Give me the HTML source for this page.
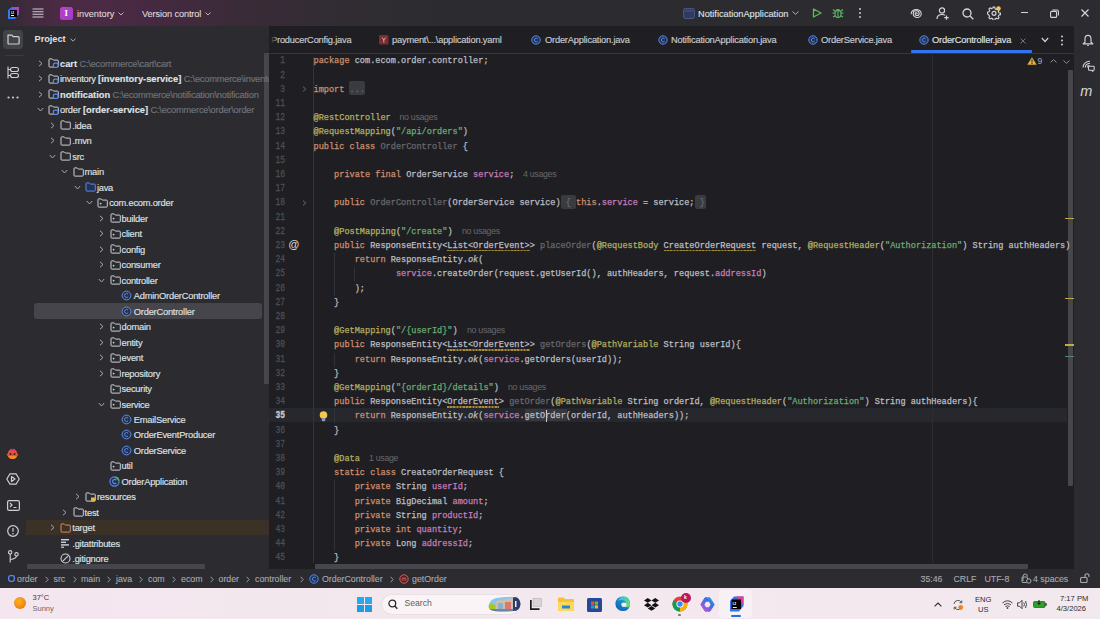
<!DOCTYPE html>
<html><head><meta charset="utf-8">
<style>
*{margin:0;padding:0;box-sizing:border-box}
html,body{width:1100px;height:619px;overflow:hidden;background:#2c2c30;font-family:"Liberation Sans",sans-serif;color:#dfe1e5}
.a{position:absolute}
#title{left:0;top:0;width:1100px;height:26px;background:linear-gradient(90deg,#2f2c33 0px,#342b36 12px,#442a40 35px,#4b2a45 60px,#4a2a44 110px,#44293f 170px,#3a2b38 240px,#312c33 340px,#2c2c30 440px)}
#strip{left:0;top:26px;width:26px;height:543px;background:#2c2c30}
#proj{left:26px;top:26px;width:243px;height:543px;background:#2c2c30}
#tabs{left:269px;top:26px;width:805px;height:28px;background:#1f1f23;border-bottom:1px solid #35373b}
#editor{left:269px;top:54px;width:805px;height:515px;background:#1f1f23;overflow:hidden}
#rstrip{left:1074px;top:26px;width:26px;height:543px;background:#2c2c30}
#status{left:0;top:569px;width:1100px;height:19px;background:#2c2c30}
#taskbar{left:0;top:588px;width:1100px;height:31px;background:linear-gradient(90deg,#f4e6ee 0%,#f3e8ee 40%,#f2e9ee 100%)}
.code{font-family:"Liberation Mono",monospace;font-size:8.58px;line-height:14.2px;white-space:pre;color:#bcbec4;-webkit-text-stroke:0.25px currentColor}
.k{color:#cf8e6d}.an{color:#b3ae60}.s{color:#6aab73}.f{color:#c77dbb}.g{color:#66686e}.it{font-style:italic}
.hint{font-family:"Liberation Sans",sans-serif;font-size:8.8px;letter-spacing:-0.3px;color:#66686d}
.lnn{display:inline-block;transform:scaleY(1.28);transform-origin:50% 60%;-webkit-text-stroke:0.2px currentColor}
.ln{font-family:"Liberation Mono",monospace;font-size:8px;line-height:14.2px;white-space:pre;color:#4e5055;text-align:right}
.tree{font-size:9.3px;letter-spacing:-0.22px;-webkit-text-stroke:0.15px currentColor;color:#dfe1e5;white-space:pre}
.tt{-webkit-text-stroke:0.12px currentColor;font-size:9.2px;line-height:13px;color:#dcd6dc;white-space:pre}
.pth{color:#6f737a}
.tree b{font-weight:bold;letter-spacing:0}
.tab{font-size:9.3px;letter-spacing:-0.2px;-webkit-text-stroke:0.15px currentColor;line-height:12px;color:#c9cbd0;white-space:pre}
.st{-webkit-text-stroke:0.1px currentColor;font-size:8.8px;line-height:12px;color:#a8aab0;white-space:pre}
.tb{line-height:10px;white-space:pre}
.wv{}
.row{position:absolute;height:15.48px;line-height:15.48px}
</style></head><body>
<div id="title" class="a">
  <svg class="a" style="left:6px;top:6px" width="14" height="14" viewBox="0 0 14 14">
    <path d="M2 4 L6 1 L13 1 L13 8 L9 13 L2 13 Z" fill="#2f7bf5"/>
    <path d="M7 1 L13 1 L13 9 Z" fill="#e9348f"/>
    <path d="M5 1 L11 1 L13 4 L13 8 Z" fill="#8c4fe8" opacity=".8"/>
    <rect x="4" y="4" width="7" height="7" fill="#000"/>
    <rect x="5" y="9" width="3" height="1" fill="#fff"/>
    <text x="5" y="8" font-size="3.5" fill="#fff" font-family="Liberation Sans" font-weight="bold">IJ</text>
  </svg>
  <svg class="a" style="left:32px;top:8px" width="12" height="10" viewBox="0 0 12 10">
    <g stroke="#d0ccd2" stroke-width="1.1"><path d="M0.5 1H11.5M0.5 3.7H11.5M0.5 6.3H11.5M0.5 9H11.5"/></g>
  </svg>
  <div class="a" style="left:59.5px;top:6.5px;width:13.5px;height:13px;border-radius:2.5px;background:linear-gradient(135deg,#c040c8,#9a3ec4);color:#fff;font:bold 9px/13px 'Liberation Serif',serif;text-align:center">I</div>
  <div class="a tt" style="left:77px;top:7.7px">inventory</div>
  <svg class="a" style="left:118px;top:12px" width="6" height="4" viewBox="0 0 6 4"><path d="M0.5 0.5L3 3L5.5 0.5" stroke="#b9b4bb" fill="none" stroke-width="1"/></svg>
  <div class="a tt" style="left:142px;top:7.7px;letter-spacing:-0.1px">Version control</div>
  <svg class="a" style="left:205px;top:12px" width="6" height="4" viewBox="0 0 6 4"><path d="M0.5 0.5L3 3L5.5 0.5" stroke="#b9b4bb" fill="none" stroke-width="1"/></svg>

  <svg class="a" style="left:683px;top:8px" width="12" height="11" viewBox="0 0 12 11"><rect x="0.6" y="0.6" width="10.8" height="9.8" rx="1.5" fill="#2f3a5c" stroke="#4a5a8c" stroke-width="1"/><rect x="2" y="2.5" width="8" height="1" fill="#4a5a8c"/></svg>
  <div class="a tt" style="left:698px;top:8px;color:#dfe1e5">NotificationApplication</div>
  <svg class="a" style="left:792px;top:11px" width="7" height="4" viewBox="0 0 7 4"><path d="M0.5 0.5L3.5 3.3L6.5 0.5" stroke="#b0b2b8" fill="none" stroke-width="1"/></svg>
  <svg class="a" style="left:812px;top:8px" width="10" height="10" viewBox="0 0 10 10"><path d="M1.5 1 L9 5 L1.5 9 Z" fill="none" stroke="#5fb865" stroke-width="1.3" stroke-linejoin="round"/></svg>
  <svg class="a" style="left:832px;top:7px" width="12" height="12" viewBox="0 0 12 12"><g stroke="#5fb865" stroke-width="1.1" fill="none"><ellipse cx="6" cy="7" rx="3" ry="3.5"/><path d="M4 3.5 Q6 1.5 8 3.5M0.5 6H3M9 6H11.5M1 10L3.2 8.8M11 10L8.8 8.8M1 2.5L3.5 4.5M11 2.5L8.5 4.5M6 4V10.5"/></g></svg>
  <svg class="a" style="left:858px;top:7px" width="4" height="12" viewBox="0 0 4 12"><g fill="#c8cacf"><circle cx="2" cy="2" r="1"/><circle cx="2" cy="6" r="1"/><circle cx="2" cy="10" r="1"/></g></svg>

  <svg class="a" style="left:910px;top:8.5px" width="13" height="10" viewBox="0 0 13 10"><path d="M7.2 5.2A1 1 0 0 0 5.2 5.2A2 2 0 0 0 9.2 5.2A3 3 0 0 0 3.2 5.2A4 4 0 0 0 11.2 5.2A5 4.4 0 0 0 1.2 5.2" transform="translate(0,-0.3) scale(1,0.95)" fill="none" stroke="#d4d6da" stroke-width="1.1" stroke-linecap="round"/></svg>
  <svg class="a" style="left:936px;top:7px" width="14" height="13" viewBox="0 0 14 13"><g stroke="#d4d6da" stroke-width="1.2" fill="none"><circle cx="6" cy="3.5" r="2.6"/><path d="M1 12 Q1 7.5 6 7.5 Q8 7.5 9 8.3"/><path d="M10.5 8.5V12.8M8.3 10.6H12.7"/></g></svg>
  <svg class="a" style="left:962px;top:8px" width="12" height="12" viewBox="0 0 12 12"><g stroke="#d4d6da" stroke-width="1.3" fill="none"><circle cx="5" cy="5" r="4"/><path d="M8 8L11.3 11.3"/></g></svg>
  <svg class="a" style="left:987px;top:6px" width="14" height="14" viewBox="0 0 14 14"><g stroke="#d4d6da" stroke-width="1.2" fill="none"><path d="M6.2 1.5h1.6l.4 1.8 1.3.7 1.7-.7 1.1 1.1-.7 1.7.7 1.3 1.8.4v1.6l-1.8.4-.7 1.3.7 1.7-1.1 1.1-1.7-.7-1.3.7-.4 1.8H6.2l-.4-1.8-1.3-.7-1.7.7-1.1-1.1.7-1.7-.7-1.3L0 8.4V6.8l1.8-.4.7-1.3-.7-1.7 1.1-1.1 1.7.7 1.3-.7z" transform="translate(0.3,-0.3) scale(0.95)"/><circle cx="7" cy="7.3" r="2"/></g><circle cx="11.5" cy="2.5" r="2.2" fill="#f2c55c"/></svg>
  <div class="a" style="left:1021px;top:12px;width:7px;height:1.2px;background:#d4d6da"></div>
  <svg class="a" style="left:1050px;top:9px" width="9" height="9" viewBox="0 0 9 9"><g stroke="#d4d6da" stroke-width="1.1" fill="none"><rect x="0.6" y="2.4" width="6" height="6" rx="1"/><path d="M2.4 1 H7 Q8.4 1 8.4 2.4 V6.6"/></g></svg>
  <svg class="a" style="left:1081px;top:9px" width="8" height="8" viewBox="0 0 8 8"><path d="M0.5 0.5L7.5 7.5M7.5 0.5L0.5 7.5" stroke="#d4d6da" stroke-width="1.2"/></svg>
</div>
<div id="strip" class="a">
  <div class="a" style="left:3px;top:4px;width:19.5px;height:18.5px;border-radius:3.5px;background:#414347"></div>
  <svg class="a" style="left:6.5px;top:8px" width="13" height="11" viewBox="0 0 13 11"><path d="M1 1.2h3.8l1.4 1.4h5q.9 0 .9.9V9.1q0 .9-.9.9H1.9q-.9 0-.9-.9z" fill="none" stroke="#ced0d6" stroke-width="1.2"/></svg>
  <div class="a" style="left:5px;top:28.5px;width:19px;height:1px;background:#393b40"></div>
  <svg class="a" style="left:7px;top:40px" width="12" height="13" viewBox="0 0 12 13"><g fill="none" stroke="#ced0d6" stroke-width="1.1"><path d="M1 0.5V12.5M1 3.5H3M1 9.5H3"/><rect x="3.5" y="1.5" width="8" height="4" rx="2"/><rect x="3.5" y="7.5" width="8" height="4" rx="2"/></g></svg>
  <svg class="a" style="left:7px;top:70px" width="12" height="3" viewBox="0 0 12 3"><g fill="#ced0d6"><circle cx="1.5" cy="1.5" r="1.1"/><circle cx="6" cy="1.5" r="1.1"/><circle cx="10.5" cy="1.5" r="1.1"/></g></svg>
  <svg class="a" style="left:6px;top:422px" width="13" height="12" viewBox="0 0 13 12"><path d="M2 5 Q2 1.5 6.5 1.5 Q11 1.5 11 5 L12.5 7 L11 8 Q10 11 6.5 11 Q3 11 2 8 L0.5 7 Z" fill="#e0553a"/><path d="M3 3 L5 0.5 L6.5 2 L8 0.5 L10 3 Z" fill="#e23c6c"/><path d="M2 8 Q3 11 6.5 11 Q10 11 11 8Z" fill="#f08a2a"/><circle cx="4.5" cy="6" r="1" fill="#3a1a1a"/><circle cx="8.5" cy="6" r="1" fill="#3a1a1a"/></svg>
  <svg class="a" style="left:6px;top:447px" width="14" height="12" viewBox="0 0 14 12"><g fill="none" stroke="#ced0d6" stroke-width="1.2" stroke-linejoin="round"><path d="M4 0.8H10L13.2 6L10 11.2H4L0.8 6Z"/><path d="M5.5 3.5L9 6L5.5 8.5Z"/></g></svg>
  <svg class="a" style="left:7px;top:474px" width="13" height="11" viewBox="0 0 13 11"><g fill="none" stroke="#ced0d6" stroke-width="1.2"><rect x="0.6" y="0.6" width="11.8" height="9.8" rx="1.5"/><path d="M3 3L5 5L3 7M6.5 7.5H9.5"/></g></svg>
  <svg class="a" style="left:7px;top:499px" width="12" height="12" viewBox="0 0 12 12"><g fill="none" stroke="#ced0d6" stroke-width="1.2"><circle cx="6" cy="6" r="5.3"/><path d="M6 3V6.8"/></g><circle cx="6" cy="8.7" r="0.8" fill="#ced0d6"/></svg>
  <svg class="a" style="left:8px;top:524px" width="11" height="13" viewBox="0 0 11 13"><g fill="none" stroke="#ced0d6" stroke-width="1.1"><circle cx="2.2" cy="2.3" r="1.7"/><circle cx="8.5" cy="4.3" r="1.7"/><path d="M2.2 4V12.5M8.5 6Q8.5 8.5 2.2 9.5"/></g></svg>
</div>
<div id="proj" class="a" style="overflow:hidden"></div>
<div class="a" style="left:0;top:26px;width:269px;height:543px;overflow:hidden">
<div class="a" style="left:0;top:-26px;width:269px;height:619px">
<div class="a" style="left:34.5px;top:33px;font:bold 9.2px/12px 'Liberation Sans',sans-serif;color:#dfe1e5">Project</div>
<svg class="a" style="left:69.5px;top:38px" width="6" height="4" viewBox="0 0 6 4"><path d="M0.5 0.6L3 3.2L5.5 0.6" fill="none" stroke="#a8aab0" stroke-width="1"/></svg>
<div class="a" style="left:264px;top:53px;width:5px;height:331px;background:#46474c;border-radius:1px"></div>
<div class="a" style="left:27px;top:563.5px;width:178px;height:5.5px;background:#46474c;border-radius:1px"></div>
<!--TREE-->
<div class="a" style="left:34px;top:303px;width:228px;height:16px;border-radius:3px;background:#45454b"></div>
<div class="a" style="left:26px;top:520px;width:243px;height:15px;background:#3b3126"></div>
<div class="a" style="left:37.6px;top:59.9px;width:5px;height:7px;line-height:0"><svg width="5" height="7" viewBox="0 0 5 7"><path d="M1 0.8L4 3.5L1 6.2" fill="none" stroke="#a8aab0" stroke-width="1"/></svg></div>
<div class="a" style="left:48.0px;top:58.4px;line-height:0"><svg width="11" height="10" viewBox="0 0 11 10"><path d="M1 1.5q0-.6.6-.6h2.6l1.2 1.2h4.1q.8 0 .8.8V8.3q0 .8-.8.8H1.8q-.8 0-.8-.8z" fill="none" stroke="#ced0d6" stroke-width="1"/><rect x="5.4" y="5.1" width="4.6" height="4.3" rx="1.5" fill="#2b2d30" stroke="#548af7" stroke-width="1.2"/></svg></div>
<div class="a tree" style="left:60.0px;top:56.9px;height:14px;line-height:14px"><b>cart</b> <span class="pth">C:\ecommerce\cart\cart</span></div>
<div class="a" style="left:37.6px;top:75.4px;width:5px;height:7px;line-height:0"><svg width="5" height="7" viewBox="0 0 5 7"><path d="M1 0.8L4 3.5L1 6.2" fill="none" stroke="#a8aab0" stroke-width="1"/></svg></div>
<div class="a" style="left:48.0px;top:73.9px;line-height:0"><svg width="11" height="10" viewBox="0 0 11 10"><path d="M1 1.5q0-.6.6-.6h2.6l1.2 1.2h4.1q.8 0 .8.8V8.3q0 .8-.8.8H1.8q-.8 0-.8-.8z" fill="none" stroke="#ced0d6" stroke-width="1"/><rect x="5.4" y="5.1" width="4.6" height="4.3" rx="1.5" fill="#2b2d30" stroke="#548af7" stroke-width="1.2"/></svg></div>
<div class="a tree" style="left:60.0px;top:72.4px;height:14px;line-height:14px">inventory <b>[inventory-service]</b> <span class="pth">C:\ecommerce\inventory\inventory</span></div>
<div class="a" style="left:37.6px;top:90.9px;width:5px;height:7px;line-height:0"><svg width="5" height="7" viewBox="0 0 5 7"><path d="M1 0.8L4 3.5L1 6.2" fill="none" stroke="#a8aab0" stroke-width="1"/></svg></div>
<div class="a" style="left:48.0px;top:89.4px;line-height:0"><svg width="11" height="10" viewBox="0 0 11 10"><path d="M1 1.5q0-.6.6-.6h2.6l1.2 1.2h4.1q.8 0 .8.8V8.3q0 .8-.8.8H1.8q-.8 0-.8-.8z" fill="none" stroke="#ced0d6" stroke-width="1"/><rect x="5.4" y="5.1" width="4.6" height="4.3" rx="1.5" fill="#2b2d30" stroke="#548af7" stroke-width="1.2"/></svg></div>
<div class="a tree" style="left:60.0px;top:87.9px;height:14px;line-height:14px"><b>notification</b> <span class="pth">C:\ecommerce\notification\notification</span></div>
<div class="a" style="left:36.6px;top:107.3px;width:7px;height:5px;line-height:0"><svg width="7" height="5" viewBox="0 0 7 5"><path d="M0.8 1L3.5 4L6.2 1" fill="none" stroke="#a8aab0" stroke-width="1"/></svg></div>
<div class="a" style="left:48.0px;top:104.8px;line-height:0"><svg width="11" height="10" viewBox="0 0 11 10"><path d="M1 1.5q0-.6.6-.6h2.6l1.2 1.2h4.1q.8 0 .8.8V8.3q0 .8-.8.8H1.8q-.8 0-.8-.8z" fill="none" stroke="#ced0d6" stroke-width="1"/><rect x="5.4" y="5.1" width="4.6" height="4.3" rx="1.5" fill="#2b2d30" stroke="#548af7" stroke-width="1.2"/></svg></div>
<div class="a tree" style="left:60.0px;top:103.3px;height:14px;line-height:14px">order <b>[order-service]</b> <span class="pth">C:\ecommerce\order\order</span></div>
<div class="a" style="left:49.9px;top:121.8px;width:5px;height:7px;line-height:0"><svg width="5" height="7" viewBox="0 0 5 7"><path d="M1 0.8L4 3.5L1 6.2" fill="none" stroke="#a8aab0" stroke-width="1"/></svg></div>
<div class="a" style="left:60.3px;top:120.3px;line-height:0"><svg width="11" height="10" viewBox="0 0 11 10"><path d="M1 1.5q0-.6.6-.6h2.6l1.2 1.2h4.1q.8 0 .8.8V8.3q0 .8-.8.8H1.8q-.8 0-.8-.8z" fill="none" stroke="#ced0d6" stroke-width="1"/></svg></div>
<div class="a tree" style="left:72.3px;top:118.8px;height:14px;line-height:14px">.idea</div>
<div class="a" style="left:49.9px;top:137.3px;width:5px;height:7px;line-height:0"><svg width="5" height="7" viewBox="0 0 5 7"><path d="M1 0.8L4 3.5L1 6.2" fill="none" stroke="#a8aab0" stroke-width="1"/></svg></div>
<div class="a" style="left:60.3px;top:135.8px;line-height:0"><svg width="11" height="10" viewBox="0 0 11 10"><path d="M1 1.5q0-.6.6-.6h2.6l1.2 1.2h4.1q.8 0 .8.8V8.3q0 .8-.8.8H1.8q-.8 0-.8-.8z" fill="none" stroke="#ced0d6" stroke-width="1"/></svg></div>
<div class="a tree" style="left:72.3px;top:134.3px;height:14px;line-height:14px">.mvn</div>
<div class="a" style="left:48.9px;top:153.8px;width:7px;height:5px;line-height:0"><svg width="7" height="5" viewBox="0 0 7 5"><path d="M0.8 1L3.5 4L6.2 1" fill="none" stroke="#a8aab0" stroke-width="1"/></svg></div>
<div class="a" style="left:60.3px;top:151.3px;line-height:0"><svg width="11" height="10" viewBox="0 0 11 10"><path d="M1 1.5q0-.6.6-.6h2.6l1.2 1.2h4.1q.8 0 .8.8V8.3q0 .8-.8.8H1.8q-.8 0-.8-.8z" fill="none" stroke="#ced0d6" stroke-width="1"/></svg></div>
<div class="a tree" style="left:72.3px;top:149.8px;height:14px;line-height:14px">src</div>
<div class="a" style="left:61.2px;top:169.3px;width:7px;height:5px;line-height:0"><svg width="7" height="5" viewBox="0 0 7 5"><path d="M0.8 1L3.5 4L6.2 1" fill="none" stroke="#a8aab0" stroke-width="1"/></svg></div>
<div class="a" style="left:72.6px;top:166.8px;line-height:0"><svg width="11" height="10" viewBox="0 0 11 10"><path d="M1 1.5q0-.6.6-.6h2.6l1.2 1.2h4.1q.8 0 .8.8V8.3q0 .8-.8.8H1.8q-.8 0-.8-.8z" fill="none" stroke="#ced0d6" stroke-width="1"/></svg></div>
<div class="a tree" style="left:84.6px;top:165.3px;height:14px;line-height:14px">main</div>
<div class="a" style="left:73.5px;top:184.7px;width:7px;height:5px;line-height:0"><svg width="7" height="5" viewBox="0 0 7 5"><path d="M0.8 1L3.5 4L6.2 1" fill="none" stroke="#a8aab0" stroke-width="1"/></svg></div>
<div class="a" style="left:84.9px;top:182.2px;line-height:0"><svg width="11" height="10" viewBox="0 0 11 10"><path d="M1 1.5q0-.6.6-.6h2.6l1.2 1.2h4.1q.8 0 .8.8V8.3q0 .8-.8.8H1.8q-.8 0-.8-.8z" fill="#25324d" stroke="#548af7" stroke-width="1"/></svg></div>
<div class="a tree" style="left:96.9px;top:180.7px;height:14px;line-height:14px">java</div>
<div class="a" style="left:85.8px;top:200.2px;width:7px;height:5px;line-height:0"><svg width="7" height="5" viewBox="0 0 7 5"><path d="M0.8 1L3.5 4L6.2 1" fill="none" stroke="#a8aab0" stroke-width="1"/></svg></div>
<div class="a" style="left:97.2px;top:197.7px;line-height:0"><svg width="11" height="10" viewBox="0 0 11 10"><path d="M1 1.5q0-.6.6-.6h2.6l1.2 1.2h4.1q.8 0 .8.8V8.3q0 .8-.8.8H1.8q-.8 0-.8-.8z" fill="none" stroke="#ced0d6" stroke-width="1"/><circle cx="3.6" cy="5.6" r=".9" fill="#ced0d6"/></svg></div>
<div class="a tree" style="left:109.2px;top:196.2px;height:14px;line-height:14px">com.ecom.order</div>
<div class="a" style="left:99.1px;top:214.7px;width:5px;height:7px;line-height:0"><svg width="5" height="7" viewBox="0 0 5 7"><path d="M1 0.8L4 3.5L1 6.2" fill="none" stroke="#a8aab0" stroke-width="1"/></svg></div>
<div class="a" style="left:109.5px;top:213.2px;line-height:0"><svg width="11" height="10" viewBox="0 0 11 10"><path d="M1 1.5q0-.6.6-.6h2.6l1.2 1.2h4.1q.8 0 .8.8V8.3q0 .8-.8.8H1.8q-.8 0-.8-.8z" fill="none" stroke="#ced0d6" stroke-width="1"/><circle cx="3.6" cy="5.6" r=".9" fill="#ced0d6"/></svg></div>
<div class="a tree" style="left:121.5px;top:211.7px;height:14px;line-height:14px">builder</div>
<div class="a" style="left:99.1px;top:230.2px;width:5px;height:7px;line-height:0"><svg width="5" height="7" viewBox="0 0 5 7"><path d="M1 0.8L4 3.5L1 6.2" fill="none" stroke="#a8aab0" stroke-width="1"/></svg></div>
<div class="a" style="left:109.5px;top:228.7px;line-height:0"><svg width="11" height="10" viewBox="0 0 11 10"><path d="M1 1.5q0-.6.6-.6h2.6l1.2 1.2h4.1q.8 0 .8.8V8.3q0 .8-.8.8H1.8q-.8 0-.8-.8z" fill="none" stroke="#ced0d6" stroke-width="1"/><circle cx="3.6" cy="5.6" r=".9" fill="#ced0d6"/></svg></div>
<div class="a tree" style="left:121.5px;top:227.2px;height:14px;line-height:14px">client</div>
<div class="a" style="left:99.1px;top:245.7px;width:5px;height:7px;line-height:0"><svg width="5" height="7" viewBox="0 0 5 7"><path d="M1 0.8L4 3.5L1 6.2" fill="none" stroke="#a8aab0" stroke-width="1"/></svg></div>
<div class="a" style="left:109.5px;top:244.2px;line-height:0"><svg width="11" height="10" viewBox="0 0 11 10"><path d="M1 1.5q0-.6.6-.6h2.6l1.2 1.2h4.1q.8 0 .8.8V8.3q0 .8-.8.8H1.8q-.8 0-.8-.8z" fill="none" stroke="#ced0d6" stroke-width="1"/><circle cx="3.6" cy="5.6" r=".9" fill="#ced0d6"/></svg></div>
<div class="a tree" style="left:121.5px;top:242.7px;height:14px;line-height:14px">config</div>
<div class="a" style="left:99.1px;top:261.1px;width:5px;height:7px;line-height:0"><svg width="5" height="7" viewBox="0 0 5 7"><path d="M1 0.8L4 3.5L1 6.2" fill="none" stroke="#a8aab0" stroke-width="1"/></svg></div>
<div class="a" style="left:109.5px;top:259.6px;line-height:0"><svg width="11" height="10" viewBox="0 0 11 10"><path d="M1 1.5q0-.6.6-.6h2.6l1.2 1.2h4.1q.8 0 .8.8V8.3q0 .8-.8.8H1.8q-.8 0-.8-.8z" fill="none" stroke="#ced0d6" stroke-width="1"/><circle cx="3.6" cy="5.6" r=".9" fill="#ced0d6"/></svg></div>
<div class="a tree" style="left:121.5px;top:258.1px;height:14px;line-height:14px">consumer</div>
<div class="a" style="left:98.1px;top:277.6px;width:7px;height:5px;line-height:0"><svg width="7" height="5" viewBox="0 0 7 5"><path d="M0.8 1L3.5 4L6.2 1" fill="none" stroke="#a8aab0" stroke-width="1"/></svg></div>
<div class="a" style="left:109.5px;top:275.1px;line-height:0"><svg width="11" height="10" viewBox="0 0 11 10"><path d="M1 1.5q0-.6.6-.6h2.6l1.2 1.2h4.1q.8 0 .8.8V8.3q0 .8-.8.8H1.8q-.8 0-.8-.8z" fill="none" stroke="#ced0d6" stroke-width="1"/><circle cx="3.6" cy="5.6" r=".9" fill="#ced0d6"/></svg></div>
<div class="a tree" style="left:121.5px;top:273.6px;height:14px;line-height:14px">controller</div>
<div class="a" style="left:120.8px;top:290.1px;line-height:0"><svg width="11" height="11" viewBox="0 0 11 11"><circle cx="5.5" cy="5.5" r="4.4" fill="#2a3147" stroke="#5b8cf0" stroke-width="1"/><path d="M7.1 4.2A2 2 0 1 0 7.1 6.8" fill="none" stroke="#5b8cf0" stroke-width="1"/></svg></div>
<div class="a tree" style="left:133.8px;top:289.1px;height:14px;line-height:14px">AdminOrderController</div>
<div class="a" style="left:120.8px;top:305.6px;line-height:0"><svg width="11" height="11" viewBox="0 0 11 11"><circle cx="5.5" cy="5.5" r="4.4" fill="#2a3147" stroke="#5b8cf0" stroke-width="1"/><path d="M7.1 4.2A2 2 0 1 0 7.1 6.8" fill="none" stroke="#5b8cf0" stroke-width="1"/></svg></div>
<div class="a tree" style="left:133.8px;top:304.6px;height:14px;line-height:14px">OrderController</div>
<div class="a" style="left:99.1px;top:323.1px;width:5px;height:7px;line-height:0"><svg width="5" height="7" viewBox="0 0 5 7"><path d="M1 0.8L4 3.5L1 6.2" fill="none" stroke="#a8aab0" stroke-width="1"/></svg></div>
<div class="a" style="left:109.5px;top:321.6px;line-height:0"><svg width="11" height="10" viewBox="0 0 11 10"><path d="M1 1.5q0-.6.6-.6h2.6l1.2 1.2h4.1q.8 0 .8.8V8.3q0 .8-.8.8H1.8q-.8 0-.8-.8z" fill="none" stroke="#ced0d6" stroke-width="1"/><circle cx="3.6" cy="5.6" r=".9" fill="#ced0d6"/></svg></div>
<div class="a tree" style="left:121.5px;top:320.1px;height:14px;line-height:14px">domain</div>
<div class="a" style="left:99.1px;top:338.5px;width:5px;height:7px;line-height:0"><svg width="5" height="7" viewBox="0 0 5 7"><path d="M1 0.8L4 3.5L1 6.2" fill="none" stroke="#a8aab0" stroke-width="1"/></svg></div>
<div class="a" style="left:109.5px;top:337.0px;line-height:0"><svg width="11" height="10" viewBox="0 0 11 10"><path d="M1 1.5q0-.6.6-.6h2.6l1.2 1.2h4.1q.8 0 .8.8V8.3q0 .8-.8.8H1.8q-.8 0-.8-.8z" fill="none" stroke="#ced0d6" stroke-width="1"/><circle cx="3.6" cy="5.6" r=".9" fill="#ced0d6"/></svg></div>
<div class="a tree" style="left:121.5px;top:335.5px;height:14px;line-height:14px">entity</div>
<div class="a" style="left:99.1px;top:354.0px;width:5px;height:7px;line-height:0"><svg width="5" height="7" viewBox="0 0 5 7"><path d="M1 0.8L4 3.5L1 6.2" fill="none" stroke="#a8aab0" stroke-width="1"/></svg></div>
<div class="a" style="left:109.5px;top:352.5px;line-height:0"><svg width="11" height="10" viewBox="0 0 11 10"><path d="M1 1.5q0-.6.6-.6h2.6l1.2 1.2h4.1q.8 0 .8.8V8.3q0 .8-.8.8H1.8q-.8 0-.8-.8z" fill="none" stroke="#ced0d6" stroke-width="1"/><circle cx="3.6" cy="5.6" r=".9" fill="#ced0d6"/></svg></div>
<div class="a tree" style="left:121.5px;top:351.0px;height:14px;line-height:14px">event</div>
<div class="a" style="left:99.1px;top:369.5px;width:5px;height:7px;line-height:0"><svg width="5" height="7" viewBox="0 0 5 7"><path d="M1 0.8L4 3.5L1 6.2" fill="none" stroke="#a8aab0" stroke-width="1"/></svg></div>
<div class="a" style="left:109.5px;top:368.0px;line-height:0"><svg width="11" height="10" viewBox="0 0 11 10"><path d="M1 1.5q0-.6.6-.6h2.6l1.2 1.2h4.1q.8 0 .8.8V8.3q0 .8-.8.8H1.8q-.8 0-.8-.8z" fill="none" stroke="#ced0d6" stroke-width="1"/><circle cx="3.6" cy="5.6" r=".9" fill="#ced0d6"/></svg></div>
<div class="a tree" style="left:121.5px;top:366.5px;height:14px;line-height:14px">repository</div>
<div class="a" style="left:109.5px;top:383.5px;line-height:0"><svg width="11" height="10" viewBox="0 0 11 10"><path d="M1 1.5q0-.6.6-.6h2.6l1.2 1.2h4.1q.8 0 .8.8V8.3q0 .8-.8.8H1.8q-.8 0-.8-.8z" fill="none" stroke="#ced0d6" stroke-width="1"/><circle cx="3.6" cy="5.6" r=".9" fill="#ced0d6"/></svg></div>
<div class="a tree" style="left:121.5px;top:382.0px;height:14px;line-height:14px">security</div>
<div class="a" style="left:98.1px;top:401.5px;width:7px;height:5px;line-height:0"><svg width="7" height="5" viewBox="0 0 7 5"><path d="M0.8 1L3.5 4L6.2 1" fill="none" stroke="#a8aab0" stroke-width="1"/></svg></div>
<div class="a" style="left:109.5px;top:399.0px;line-height:0"><svg width="11" height="10" viewBox="0 0 11 10"><path d="M1 1.5q0-.6.6-.6h2.6l1.2 1.2h4.1q.8 0 .8.8V8.3q0 .8-.8.8H1.8q-.8 0-.8-.8z" fill="none" stroke="#ced0d6" stroke-width="1"/><circle cx="3.6" cy="5.6" r=".9" fill="#ced0d6"/></svg></div>
<div class="a tree" style="left:121.5px;top:397.5px;height:14px;line-height:14px">service</div>
<div class="a" style="left:120.8px;top:413.9px;line-height:0"><svg width="11" height="11" viewBox="0 0 11 11"><circle cx="5.5" cy="5.5" r="4.4" fill="#2a3147" stroke="#5b8cf0" stroke-width="1"/><path d="M7.1 4.2A2 2 0 1 0 7.1 6.8" fill="none" stroke="#5b8cf0" stroke-width="1"/></svg></div>
<div class="a tree" style="left:133.8px;top:412.9px;height:14px;line-height:14px">EmailService</div>
<div class="a" style="left:120.8px;top:429.4px;line-height:0"><svg width="11" height="11" viewBox="0 0 11 11"><circle cx="5.5" cy="5.5" r="4.4" fill="#2a3147" stroke="#5b8cf0" stroke-width="1"/><path d="M7.1 4.2A2 2 0 1 0 7.1 6.8" fill="none" stroke="#5b8cf0" stroke-width="1"/></svg></div>
<div class="a tree" style="left:133.8px;top:428.4px;height:14px;line-height:14px">OrderEventProducer</div>
<div class="a" style="left:120.8px;top:444.9px;line-height:0"><svg width="11" height="11" viewBox="0 0 11 11"><circle cx="5.5" cy="5.5" r="4.4" fill="#2a3147" stroke="#5b8cf0" stroke-width="1"/><path d="M7.1 4.2A2 2 0 1 0 7.1 6.8" fill="none" stroke="#5b8cf0" stroke-width="1"/></svg></div>
<div class="a tree" style="left:133.8px;top:443.9px;height:14px;line-height:14px">OrderService</div>
<div class="a" style="left:109.5px;top:460.9px;line-height:0"><svg width="11" height="10" viewBox="0 0 11 10"><path d="M1 1.5q0-.6.6-.6h2.6l1.2 1.2h4.1q.8 0 .8.8V8.3q0 .8-.8.8H1.8q-.8 0-.8-.8z" fill="none" stroke="#ced0d6" stroke-width="1"/><circle cx="3.6" cy="5.6" r=".9" fill="#ced0d6"/></svg></div>
<div class="a tree" style="left:121.5px;top:459.4px;height:14px;line-height:14px">util</div>
<div class="a" style="left:108.5px;top:475.9px;line-height:0"><svg width="11" height="11" viewBox="0 0 11 11"><circle cx="5.5" cy="5.5" r="4.6" fill="#25324d" stroke="#548af7" stroke-width="1.1"/><path d="M7.3 4.1A2.1 2.1 0 1 0 7.3 6.9" fill="none" stroke="#548af7" stroke-width="1.1"/><path d="M6.5 1.2A4.5 4.5 0 0 1 9.8 4.5" fill="none" stroke="#5fb865" stroke-width="1.4"/></svg></div>
<div class="a tree" style="left:121.5px;top:474.9px;height:14px;line-height:14px">OrderApplication</div>
<div class="a" style="left:74.5px;top:493.3px;width:5px;height:7px;line-height:0"><svg width="5" height="7" viewBox="0 0 5 7"><path d="M1 0.8L4 3.5L1 6.2" fill="none" stroke="#a8aab0" stroke-width="1"/></svg></div>
<div class="a" style="left:84.9px;top:491.8px;line-height:0"><svg width="11" height="10" viewBox="0 0 11 10"><path d="M1 1.5q0-.6.6-.6h2.6l1.2 1.2h4.1q.8 0 .8.8V8.3q0 .8-.8.8H1.8q-.8 0-.8-.8z" fill="none" stroke="#ced0d6" stroke-width="1"/><rect x="6" y="5.5" width="4" height="4" fill="#e0b847"/></svg></div>
<div class="a tree" style="left:96.9px;top:490.3px;height:14px;line-height:14px">resources</div>
<div class="a" style="left:62.2px;top:508.8px;width:5px;height:7px;line-height:0"><svg width="5" height="7" viewBox="0 0 5 7"><path d="M1 0.8L4 3.5L1 6.2" fill="none" stroke="#a8aab0" stroke-width="1"/></svg></div>
<div class="a" style="left:72.6px;top:507.3px;line-height:0"><svg width="11" height="10" viewBox="0 0 11 10"><path d="M1 1.5q0-.6.6-.6h2.6l1.2 1.2h4.1q.8 0 .8.8V8.3q0 .8-.8.8H1.8q-.8 0-.8-.8z" fill="none" stroke="#ced0d6" stroke-width="1"/></svg></div>
<div class="a tree" style="left:84.6px;top:505.8px;height:14px;line-height:14px">test</div>
<div class="a" style="left:49.9px;top:524.3px;width:5px;height:7px;line-height:0"><svg width="5" height="7" viewBox="0 0 5 7"><path d="M1 0.8L4 3.5L1 6.2" fill="none" stroke="#a8aab0" stroke-width="1"/></svg></div>
<div class="a" style="left:60.3px;top:522.8px;line-height:0"><svg width="11" height="10" viewBox="0 0 11 10"><path d="M1 1.5q0-.6.6-.6h2.6l1.2 1.2h4.1q.8 0 .8.8V8.3q0 .8-.8.8H1.8q-.8 0-.8-.8z" fill="none" stroke="#d98a5b" stroke-width="1"/></svg></div>
<div class="a tree" style="left:72.3px;top:521.3px;height:14px;line-height:14px">target</div>
<div class="a" style="left:60.3px;top:538.3px;line-height:0"><svg width="11" height="10" viewBox="0 0 11 10"><g fill="#ced0d6"><rect x="1" y="1" width="8" height="1.4"/><rect x="1" y="3.6" width="5" height="1.4"/><rect x="1" y="6.2" width="8" height="1.4"/><rect x="1" y="8.6" width="3" height="1.2"/></g></svg></div>
<div class="a tree" style="left:72.3px;top:536.8px;height:14px;line-height:14px">.gitattributes</div>
<div class="a" style="left:60.3px;top:553.3px;line-height:0"><svg width="11" height="11" viewBox="0 0 11 11"><circle cx="5.5" cy="5.5" r="4.5" fill="none" stroke="#ced0d6" stroke-width="1.1"/><path d="M2.3 8.7L8.7 2.3" stroke="#ced0d6" stroke-width="1.1"/></svg></div>
<div class="a tree" style="left:72.3px;top:552.3px;height:14px;line-height:14px">.gitignore</div>
<!--/TREE-->
</div></div>
<div id="tabs" class="a" style="overflow:hidden">
  <div class="a tab" style="left:2px;top:8px">ProducerConfig.java</div>
  <div class="a" style="left:0;top:0;width:9px;height:26px;background:linear-gradient(90deg,#1f1f23 20%,rgba(31,31,35,0))"></div>
  <svg class="a" style="left:110px;top:9px" width="10" height="10" viewBox="0 0 10 10"><rect x="0" y="0" width="9.5" height="9.5" rx="1.5" fill="#7a2e33"/><path d="M3 2.5L4.8 5L6.6 2.5M4.8 5V7.5" stroke="#e8a0a5" stroke-width="1" fill="none"/></svg>
  <div class="a tab" style="left:123px;top:8px">payment\...\application.yaml</div>
  <div class="a" style="left:262px;top:9px;line-height:0"><svg width="10" height="10" viewBox="0 0 10 10"><circle cx="5" cy="5" r="4.2" fill="#25324d" stroke="#548af7" stroke-width="1"/><path d="M6.6 3.7A1.9 1.9 0 1 0 6.6 6.3" fill="none" stroke="#548af7" stroke-width="1"/></svg></div>
  <div class="a tab" style="left:276px;top:8px">OrderApplication.java</div>
  <div class="a" style="left:389px;top:9px;line-height:0"><svg width="10" height="10" viewBox="0 0 10 10"><circle cx="5" cy="5" r="4.2" fill="#25324d" stroke="#548af7" stroke-width="1"/><path d="M6.6 3.7A1.9 1.9 0 1 0 6.6 6.3" fill="none" stroke="#548af7" stroke-width="1"/></svg></div>
  <div class="a tab" style="left:402px;top:8px">NotificationApplication.java</div>
  <div class="a" style="left:539px;top:9px;line-height:0"><svg width="10" height="10" viewBox="0 0 10 10"><circle cx="5" cy="5" r="4.2" fill="#25324d" stroke="#548af7" stroke-width="1"/><path d="M6.6 3.7A1.9 1.9 0 1 0 6.6 6.3" fill="none" stroke="#548af7" stroke-width="1"/></svg></div>
  <div class="a tab" style="left:552px;top:8px">OrderService.java</div>
  <div class="a" style="left:650px;top:9px;line-height:0"><svg width="10" height="10" viewBox="0 0 10 10"><circle cx="5" cy="5" r="4.2" fill="#25324d" stroke="#548af7" stroke-width="1"/><path d="M6.6 3.7A1.9 1.9 0 1 0 6.6 6.3" fill="none" stroke="#548af7" stroke-width="1"/></svg></div>
  <div class="a tab" style="left:663px;top:8px;color:#dfe1e5">OrderController.java</div>
  <svg class="a" style="left:751px;top:12px" width="6" height="6" viewBox="0 0 6 6"><path d="M0.5 0.5L5.5 5.5M5.5 0.5L0.5 5.5" stroke="#6f737a" stroke-width="1"/></svg>
  <div class="a" style="left:641.5px;top:24px;width:121.5px;height:3px;background:#3574f0;border-radius:1px"></div>
  <svg class="a" style="left:772px;top:11px" width="8" height="6" viewBox="0 0 8 6"><path d="M0.8 1L4 4.5L7.2 1" fill="none" stroke="#ced0d6" stroke-width="1.2"/></svg>
  <svg class="a" style="left:791px;top:9px" width="4" height="11" viewBox="0 0 4 11"><g fill="#ced0d6"><circle cx="2" cy="1.5" r="1"/><circle cx="2" cy="5.5" r="1"/><circle cx="2" cy="9.5" r="1"/></g></svg>
</div>
<div id="editor" class="a">
  <div class="a" style="left:0;top:353.5px;width:798px;height:14px;background:#26282e"></div>
<div class="a" style="left:43.5px;top:3px;width:1px;height:506px;background:#333439"></div>
<div class="a" style="left:64.5px;top:199.1px;width:1px;height:42.6px;background:#313338"></div>
<div class="a" style="left:64.5px;top:298.5px;width:1px;height:14.2px;background:#313338"></div>
<div class="a" style="left:64.5px;top:355.3px;width:1px;height:14.2px;background:#313338"></div>
<div class="a" style="left:64.5px;top:426.3px;width:1px;height:71.0px;background:#313338"></div>
<div class="a" style="left:85px;top:213.3px;width:1px;height:14.2px;background:#313338"></div>
<div class="a" style="left:178.4px;top:195.9px;width:82.4px;height:1.6px;background:repeating-linear-gradient(90deg,#a88c3a 0 1.6px,#6d5c2c 1.6px 3.2px)"></div>
<div class="a" style="left:394.7px;top:195.9px;width:92.7px;height:1.6px;background:repeating-linear-gradient(90deg,#a88c3a 0 1.6px,#6d5c2c 1.6px 3.2px)"></div>
<div class="a" style="left:178.4px;top:295.3px;width:82.4px;height:1.6px;background:repeating-linear-gradient(90deg,#a88c3a 0 1.6px,#6d5c2c 1.6px 3.2px)"></div>
<div class="a" style="left:178.4px;top:352.1px;width:51.5px;height:1.6px;background:repeating-linear-gradient(90deg,#a88c3a 0 1.6px,#6d5c2c 1.6px 3.2px)"></div>
<div class="a" style="left:663px;top:0;width:1px;height:509px;background:#2c2c31"></div>
<div class="a hint" style="left:130.5px;top:calc(60.1px - 1px);line-height:9px">no usages</div>
<div class="a hint" style="left:254px;top:calc(116.9px - 1px);line-height:9px">4 usages</div>
<div class="a hint" style="left:193px;top:calc(173.7px - 1px);line-height:9px">no usages</div>
<div class="a hint" style="left:198px;top:calc(273.1px - 1px);line-height:9px">no usages</div>
<div class="a hint" style="left:239px;top:calc(329.9px - 1px);line-height:9px">no usages</div>
<div class="a hint" style="left:100px;top:calc(400.9px - 1px);line-height:9px">1 usage</div>
<div class="a" style="left:80px;top:27.4px;width:16px;height:14px;border-radius:2px;background:#393b40"></div>
<div class="a" style="left:292px;top:141.0px;width:15px;height:14px;border-radius:2px;background:#393b40"></div>
<div class="a" style="left:426px;top:141.0px;width:11px;height:14px;border-radius:2px;background:#393b40"></div>
<div class="a" style="left:256px;top:355.3px;width:41.5px;height:11.5px;background:#36383d"></div>
<svg class="a" style="left:33px;top:32.2px" width="5" height="6" viewBox="0 0 5 6"><path d="M1 0.6L3.8 3L1 5.4" fill="none" stroke="#6f737a" stroke-width="0.9"/></svg>
<svg class="a" style="left:33px;top:145.8px" width="5" height="6" viewBox="0 0 5 6"><path d="M1 0.6L3.8 3L1 5.4" fill="none" stroke="#6f737a" stroke-width="0.9"/></svg>
<div class="a" style="left:19.5px;top:184.1px;font:bold 11px/12px 'Liberation Sans';color:#d0d2d6">@</div>
<svg class="a" style="left:50px;top:357.1px" width="9" height="11" viewBox="0 0 9 11"><circle cx="4.5" cy="4" r="3.8" fill="#f2c94c"/><rect x="2.8" y="7" width="3.4" height="3.2" rx=".6" fill="#9a92b8"/></svg>
<div class="a" style="left:276.5px;top:356.3px;width:1px;height:12px;background:#ced0d6"></div>
<svg class="a" style="left:758px;top:3px" width="10" height="8" viewBox="0 0 10 8"><path d="M5 0.3L9.7 7.7H0.3Z" fill="#e3b341"/><rect x="4.5" y="2.5" width="1" height="3" fill="#1f1f23"/><rect x="4.5" y="6" width="1" height="1" fill="#1f1f23"/></svg>
<div class="a hint" style="left:768.5px;top:2px;font-size:8.5px;line-height:10px;color:#a8aab0">9</div>
<svg class="a" style="left:780.5px;top:5px" width="7" height="4" viewBox="0 0 7 4"><path d="M0.5 3.5L3.5 0.6L6.5 3.5" fill="none" stroke="#8c8e94" stroke-width="1"/></svg>
<svg class="a" style="left:793.5px;top:5.5px" width="7" height="4" viewBox="0 0 7 4"><path d="M0.5 0.5L3.5 3.4L6.5 0.5" fill="none" stroke="#8c8e94" stroke-width="1"/></svg>
<div class="a" style="left:799px;top:16px;width:4.8px;height:416px;background:#46464b;border-radius:1px"></div>
<div class="a" style="left:795.5px;top:163.5px;width:9px;height:1.5px;background:#c9a646"></div>
<div class="a" style="left:795.5px;top:243.8px;width:9px;height:1.5px;background:#c9a646"></div>
<div class="a" style="left:795.5px;top:290.0px;width:9px;height:1.5px;background:#c9a646"></div>
<div class="a" style="left:795.5px;top:301.5px;width:9px;height:1.5px;background:#4f8a6a"></div>
<div class="a" style="left:46px;top:509.5px;width:713px;height:5.5px;background:#46474c;border-radius:1px"></div>
  <div class="a ln" style="left:0;top:0.3px;width:16px"><span class="lnn">1</span>
<span class="lnn">2</span>
<span class="lnn">3</span>
<span class="lnn">11</span>
<span class="lnn">12</span>
<span class="lnn">13</span>
<span class="lnn">14</span>
<span class="lnn">15</span>
<span class="lnn">16</span>
<span class="lnn">17</span>
<span class="lnn">18</span>
<span class="lnn">21</span>
<span class="lnn">22</span>
<span class="lnn">23</span>
<span class="lnn">24</span>
<span class="lnn">25</span>
<span class="lnn">26</span>
<span class="lnn">27</span>
<span class="lnn">28</span>
<span class="lnn">29</span>
<span class="lnn">30</span>
<span class="lnn">31</span>
<span class="lnn">32</span>
<span class="lnn">33</span>
<span class="lnn">34</span>
<span class="lnn" style="color:#c9cbd0;font-weight:bold">35</span>
<span class="lnn">36</span>
<span class="lnn">37</span>
<span class="lnn">38</span>
<span class="lnn">39</span>
<span class="lnn">40</span>
<span class="lnn">41</span>
<span class="lnn">42</span>
<span class="lnn">43</span>
<span class="lnn">44</span>
<span class="lnn">45</span></div>
  <div class="a code" style="left:44.5px;top:0.3px"><span class="k">package</span> com.ecom.order.controller;

<span class="k">import</span> <span class="g">...</span>

<span class="an">@RestController</span>
<span class="an">@RequestMapping</span>(<span class="s">"/api/orders"</span>)
<span class="k">public class</span> <span class="g">OrderController</span> {

    <span class="k">private final</span> OrderService <span class="f">service</span>;

    <span class="k">public</span> <span class="g">OrderController</span>(OrderService service) <span class="g">{</span> <span class="k">this</span>.<span class="f">service</span> = service; <span class="g">}</span>

    <span class="an">@PostMapping</span>(<span class="s">"/create"</span>)
    <span class="k">public</span> ResponseEntity&lt;<span class="wv">List&lt;OrderEvent&gt;&gt;</span> <span class="g">placeOrder</span>(<span class="an">@RequestBody</span> <span class="wv">CreateOrderRequest</span> request, <span class="an">@RequestHeader</span>(<span class="s">"Authorization"</span>) String authHeaders)
        <span class="k">return</span> ResponseEntity.<span class="it">ok</span>(
                <span class="f">service</span>.createOrder(request.getUserId(), authHeaders, request.<span class="f">addressId</span>)
        );
    }

    <span class="an">@GetMapping</span>(<span class="s">"/{userId}"</span>)
    <span class="k">public</span> ResponseEntity&lt;<span class="wv">List&lt;OrderEvent&gt;&gt;</span> <span class="g">getOrders</span>(<span class="an">@PathVariable</span> String userId){
        <span class="k">return</span> ResponseEntity.<span class="it">ok</span>(<span class="f">service</span>.getOrders(userId));
    }
    <span class="an">@GetMapping</span>(<span class="s">"{orderId}/details"</span>)
    <span class="k">public</span> ResponseEntity&lt;<span class="wv">OrderEvent</span>&gt; <span class="g">getOrder</span>(<span class="an">@PathVariable</span> String orderId, <span class="an">@RequestHeader</span>(<span class="s">"Authorization"</span>) String authHeaders){
        <span class="k">return</span> ResponseEntity.<span class="it">ok</span>(<span class="f">service</span>.getOrder(orderId, authHeaders));
    }

    <span class="an">@Data</span>
    <span class="k">static class</span> CreateOrderRequest {
        <span class="k">private</span> String <span class="f">userId</span>;
        <span class="k">private</span> BigDecimal <span class="f">amount</span>;
        <span class="k">private</span> String <span class="f">productId</span>;
        <span class="k">private int</span> <span class="f">quantity</span>;
        <span class="k">private</span> Long <span class="f">addressId</span>;
    }</div>
</div>
<div id="rstrip" class="a">
  <svg class="a" style="left:8px;top:8px" width="12" height="12" viewBox="0 0 12 12"><g fill="none" stroke="#ced0d6" stroke-width="1.15" stroke-linejoin="round"><path d="M3 8.3V5Q3 1.3 6 1.3Q9 1.3 9 5V8.3L10.8 9.8H1.2Z"/><path d="M5 11.2H7"/></g></svg>
  <svg class="a" style="left:8px;top:34px" width="13" height="12" viewBox="0 0 13 12"><g fill="none" stroke="#ced0d6" stroke-width="1.05"><path d="M8 1.3A6.5 6.5 0 0 0 1 7.5M8 3.5A4.2 4.2 0 0 0 3.2 7.5M7.5 5.6A2 2 0 0 0 5.3 7.3"/><path d="M7.2 6.2H11.5Q12.2 6.2 12.2 6.9V9.6Q12.2 10.3 11.5 10.3H10.8V11.4L9.6 10.3H7.2Q6.5 10.3 6.5 9.6V6.9Q6.5 6.2 7.2 6.2Z" stroke-linejoin="round"/></g></svg>
  <div class="a" style="left:6.3px;top:58.5px;font:italic 14.5px/12px 'Liberation Sans',sans-serif;color:#d4d6da;letter-spacing:0">m</div>
</div>
<div id="status" class="a"></div>
<div class="a" style="left:0;top:0;width:1100px;height:619px;pointer-events:none">
<svg class="a" style="left:8px;top:575px" width="7" height="7" viewBox="0 0 7 7"><rect x="0.7" y="0.7" width="5.6" height="5.6" rx="1.8" fill="none" stroke="#548af7" stroke-width="1.3"/></svg>
<div class="a st" style="left:17px;top:572.8px">order</div>
<div class="a st" style="left:53.5px;top:572.8px">src</div>
<div class="a st" style="left:81px;top:572.8px">main</div>
<div class="a st" style="left:116px;top:572.8px">java</div>
<div class="a st" style="left:148px;top:572.8px">com</div>
<div class="a st" style="left:181px;top:572.8px">ecom</div>
<div class="a st" style="left:218.5px;top:572.8px">order</div>
<div class="a st" style="left:255px;top:572.8px">controller</div>
<div class="a st" style="left:322px;top:572.8px">OrderController</div>
<div class="a st" style="left:412px;top:572.8px">getOrder</div>
<svg class="a" style="left:44.5px;top:575.5px" width="4" height="7" viewBox="0 0 4 7"><path d="M0.6 0.8L3.2 3.5L0.6 6.2" fill="none" stroke="#9a9ca2" stroke-width="1"/></svg>
<svg class="a" style="left:72.5px;top:575.5px" width="4" height="7" viewBox="0 0 4 7"><path d="M0.6 0.8L3.2 3.5L0.6 6.2" fill="none" stroke="#9a9ca2" stroke-width="1"/></svg>
<svg class="a" style="left:107px;top:575.5px" width="4" height="7" viewBox="0 0 4 7"><path d="M0.6 0.8L3.2 3.5L0.6 6.2" fill="none" stroke="#9a9ca2" stroke-width="1"/></svg>
<svg class="a" style="left:138.5px;top:575.5px" width="4" height="7" viewBox="0 0 4 7"><path d="M0.6 0.8L3.2 3.5L0.6 6.2" fill="none" stroke="#9a9ca2" stroke-width="1"/></svg>
<svg class="a" style="left:172px;top:575.5px" width="4" height="7" viewBox="0 0 4 7"><path d="M0.6 0.8L3.2 3.5L0.6 6.2" fill="none" stroke="#9a9ca2" stroke-width="1"/></svg>
<svg class="a" style="left:210px;top:575.5px" width="4" height="7" viewBox="0 0 4 7"><path d="M0.6 0.8L3.2 3.5L0.6 6.2" fill="none" stroke="#9a9ca2" stroke-width="1"/></svg>
<svg class="a" style="left:245.5px;top:575.5px" width="4" height="7" viewBox="0 0 4 7"><path d="M0.6 0.8L3.2 3.5L0.6 6.2" fill="none" stroke="#9a9ca2" stroke-width="1"/></svg>
<svg class="a" style="left:299.5px;top:575.5px" width="4" height="7" viewBox="0 0 4 7"><path d="M0.6 0.8L3.2 3.5L0.6 6.2" fill="none" stroke="#9a9ca2" stroke-width="1"/></svg>
<svg class="a" style="left:389.5px;top:575.5px" width="4" height="7" viewBox="0 0 4 7"><path d="M0.6 0.8L3.2 3.5L0.6 6.2" fill="none" stroke="#9a9ca2" stroke-width="1"/></svg>
<svg class="a" style="left:309px;top:573.5px" width="10" height="10" viewBox="0 0 10 10"><circle cx="5" cy="5" r="4.2" fill="#25324d" stroke="#548af7" stroke-width="1"/><path d="M6.6 3.7A1.9 1.9 0 1 0 6.6 6.3" fill="none" stroke="#548af7" stroke-width="1"/></svg>
<svg class="a" style="left:399px;top:573.5px" width="10" height="10" viewBox="0 0 10 10"><circle cx="5" cy="5" r="4.2" fill="#4a2226" stroke="#db5c5c" stroke-width="1"/><path d="M3.2 6.8V4.2M3.2 4.8Q3.2 3.6 4.1 3.6Q5 3.6 5 4.8V6.8M5 4.8Q5 3.6 5.9 3.6Q6.8 3.6 6.8 4.8V6.8" fill="none" stroke="#db5c5c" stroke-width=".8"/></svg>
<div class="a st" style="left:920.5px;top:572.8px">35:46</div>
<div class="a st" style="left:953.5px;top:572.8px">CRLF</div>
<div class="a st" style="left:984.5px;top:572.8px">UTF-8</div>
<div class="a st" style="left:1033px;top:572.8px">4 spaces</div>
<svg class="a" style="left:1020.5px;top:573px" width="11" height="11" viewBox="0 0 11 11"><g fill="none" stroke="#a8aab0" stroke-width="1"><path d="M2 8V3.5Q2 1 4.2 1Q6.4 1 6.4 3.5"/><rect x="1" y="4" width="5.5" height="5.5" rx="1"/><circle cx="7.8" cy="8" r="2.2" fill="#2c2c30"/></g></svg>
<svg class="a" style="left:1080px;top:573px" width="10" height="10" viewBox="0 0 10 10"><g fill="none" stroke="#a8aab0" stroke-width="1.1"><rect x="0.6" y="4.5" width="6.5" height="5" rx="1"/><path d="M5 4.5V3Q5 0.8 7 0.8Q9 0.8 9 3V4"/></g></svg>
</div>
<div id="taskbar" class="a">
  <div class="a" style="left:13.8px;top:8.7px;width:12.7px;height:12.7px;border-radius:50%;background:radial-gradient(circle at 40% 35%,#ffb020,#f08a10 60%,#e86a10)"></div>
  <div class="a tb" style="left:32.5px;top:5px;font-size:7.5px;color:#3d3a3d">37°C</div>
  <div class="a tb" style="left:32.5px;top:15.5px;font-size:7.5px;color:#6b666a">Sunny</div>
  <svg class="a" style="left:357px;top:8.5px" width="15" height="15" viewBox="0 0 15 15"><g fill="#1a9ce8"><rect x="0" y="0" width="7" height="7" fill="#2aa8f0"/><rect x="8" y="0" width="7" height="7" fill="#2aa8f0"/><rect x="0" y="8" width="7" height="7"/><rect x="8" y="8" width="7" height="7"/></g></svg>
  <div class="a" style="left:382px;top:6.5px;width:138px;height:19.5px;border-radius:10px;background:#faf4f7;box-shadow:0 0 0 0.6px #e0d8dd"></div>
  <svg class="a" style="left:388px;top:10.5px" width="10" height="11" viewBox="0 0 10 11"><g fill="none" stroke="#2a2a2a" stroke-width="1.3"><circle cx="4.3" cy="4.5" r="3.4"/><path d="M6.8 7L9.3 9.8"/></g></svg>
  <div class="a tb" style="left:404.5px;top:9.5px;font-size:8.6px;color:#605b5f">Search</div>
  <svg class="a" style="left:487.5px;top:8px" width="33" height="16" viewBox="0 0 33 16"><defs><clipPath id="thc"><path d="M2 6Q4 2 12 1.5Q22 0.5 27 1Q32 2 32.5 8Q32 14.5 26 15Q14 16 6 15Q0 14 0.5 10Q1 7.5 2 6Z"/></clipPath></defs><g clip-path="url(#thc)"><rect width="33" height="16" fill="#8cc4ec"/><path d="M8 5L26 1.5L30 2V15H8Z" fill="#c9c0b0"/><rect x="10" y="7" width="5" height="6" fill="#8fb0c8"/><rect x="17" y="6" width="6" height="7" fill="#d87a6c"/><path d="M25 1.5L33 0V16H25Z" fill="#2e3a6a"/><rect x="27" y="5" width="1.5" height="6" fill="#eee"/><circle cx="4" cy="11" r="3.2" fill="#a8c81a"/><rect x="0" y="13" width="33" height="3" fill="#3a5a9a" opacity=".6"/></g></svg>
  <svg class="a" style="left:529.5px;top:9.5px" width="12" height="12" viewBox="0 0 12 12"><rect x="3" y="0.5" width="8.5" height="8" fill="#d8d4d6" stroke="#aaa" stroke-width=".5"/><path d="M0.8 2V11.2H9.5" fill="none" stroke="#1a1a1a" stroke-width="1.8"/></svg>
  <svg class="a" style="left:558px;top:9px" width="16" height="14" viewBox="0 0 16 14"><path d="M0 1.5Q0 0.5 1 0.5H5.5L7 2H15Q16 2 16 3V13Q16 14 15 14H1Q0 14 0 13Z" fill="#f5c136"/><path d="M0 5H16V13Q16 14 15 14H1Q0 14 0 13Z" fill="#ffd75a"/><rect x="4" y="8.5" width="8" height="3" fill="#1f8ad8"/></svg>
  <svg class="a" style="left:586.5px;top:9px" width="15" height="15" viewBox="0 0 15 15"><rect x="0" y="1" width="15" height="14" rx="1.5" fill="#23489c"/><rect x="4" y="4.5" width="3.2" height="3.2" fill="#f25022"/><rect x="7.8" y="4.5" width="3.2" height="3.2" fill="#7fba00"/><rect x="4" y="8.3" width="3.2" height="3.2" fill="#00a4ef"/><rect x="7.8" y="8.3" width="3.2" height="3.2" fill="#ffb900"/></svg>
  <svg class="a" style="left:615px;top:8px" width="15.5" height="15.5" viewBox="0 0 16 16"><defs><linearGradient id="eg1" x1="0" y1="1" x2="1" y2="0"><stop offset="0" stop-color="#0c59a4"/><stop offset=".6" stop-color="#1b8fd6"/><stop offset="1" stop-color="#35c1f1"/></linearGradient><linearGradient id="eg2" x1="0" y1="0" x2="1" y2="1"><stop offset="0" stop-color="#33bde8"/><stop offset="1" stop-color="#6ee05a"/></linearGradient></defs><circle cx="8" cy="8" r="7.6" fill="url(#eg1)"/><path d="M3 5Q5 0.8 9.5 0.6Q15.2 1 15.5 8.2Q15.5 11.5 12.3 11.5Q10 11.5 9.5 10Q12 9.5 11.5 7.2Q10.5 4 7 4.2Q4.5 4.5 3 5Z" fill="url(#eg2)"/><ellipse cx="9.2" cy="9" rx="2.8" ry="2.3" fill="#f2e8ee"/><path d="M6.5 9Q6.5 12.5 10 12.8Q12.5 13 14.5 11.8Q12.5 15.5 8.5 15.5Q4 15.5 2.5 11" fill="#1570c0"/></svg>
  <svg class="a" style="left:643.5px;top:10px" width="15" height="13" viewBox="0 0 15 13"><g fill="#111"><path d="M3.75 0L0 2.4L3.75 4.8L7.5 2.4Z"/><path d="M11.25 0L7.5 2.4L11.25 4.8L15 2.4Z"/><path d="M0 7.2L3.75 9.6L7.5 7.2L3.75 4.8Z"/><path d="M7.5 7.2L11.25 9.6L15 7.2L11.25 4.8Z"/><path d="M3.75 10.4L7.5 12.8L11.25 10.4L7.5 8Z"/></g></svg>
  <svg class="a" style="left:671.5px;top:8px" width="16" height="16" viewBox="0 0 16 16"><circle cx="8" cy="8" r="7.5" fill="#db4437"/><path d="M8 8L1.5 4.2A7.5 7.5 0 0 0 8 15.5Z" fill="#0f9d58"/><path d="M8 8L8 15.5A7.5 7.5 0 0 0 14.5 4.3Z" fill="#f4b400"/><circle cx="8" cy="8" r="3.6" fill="#fff"/><circle cx="8" cy="8" r="2.7" fill="#4285f4"/></svg>
  <div class="a" style="left:680.5px;top:4.5px;width:10px;height:10px;border-radius:50%;background:#c0155a;color:#fff;font:bold 5px/9.5px 'Liberation Sans';text-align:center">k</div>
  <div class="a" style="left:678px;top:26px;width:3px;height:1.5px;background:#7a767a;border-radius:1px"></div>
  <svg class="a" style="left:700px;top:8.5px" width="15" height="15" viewBox="0 0 15 15"><defs><linearGradient id="cg" x1="1" y1="0" x2="0" y2="1"><stop offset="0" stop-color="#26c0e8"/><stop offset=".35" stop-color="#3a6ee0"/><stop offset=".7" stop-color="#8e5ae0"/><stop offset="1" stop-color="#d45cc8"/></linearGradient></defs><path d="M5 0.8H10L14.2 7.5L10 14.2H5L0.8 7.5Z" fill="url(#cg)" stroke="url(#cg)" stroke-width="1" stroke-linejoin="round"/><path d="M6 4.8H9L10.6 7.5L9 10.2H6L4.4 7.5Z" fill="#f2e8ee"/></svg>
  <div class="a" style="left:719px;top:2px;width:33px;height:28px;border-radius:4px;background:#f7f1f5"></div>
  <svg class="a" style="left:728px;top:8px" width="16" height="16" viewBox="0 0 16 16"><path d="M2 5L6 0.5H15.5V10L11 15.5H2Z" fill="#3b6fe8"/><path d="M8 0.5H15.5V9Z" fill="#e33e8a"/><rect x="3.5" y="3.5" width="9.5" height="9.5" fill="#000"/><rect x="4.8" y="11" width="4" height="0.9" fill="#fff"/><text x="4.6" y="8.5" font-size="4.2" fill="#fff" font-family="Liberation Sans" font-weight="bold">IJ</text></svg>
  <div class="a" style="left:731px;top:26.5px;width:10px;height:2px;background:#1f6fd8;border-radius:1px"></div>
  <svg class="a" style="left:933.5px;top:13.5px" width="8" height="5" viewBox="0 0 8 5"><path d="M0.6 4.3L4 1L7.4 4.3" fill="none" stroke="#2a2a2a" stroke-width="1.1"/></svg>
  <svg class="a" style="left:952px;top:10.5px" width="12" height="12" viewBox="0 0 12 12"><g fill="none" stroke="#555" stroke-width="1"><path d="M2 5A4 4 0 0 1 9.5 3.5M10 7A4 4 0 0 1 2.5 8.5"/><path d="M9.8 1.5V3.8H7.5M2.2 10.5V8.2H4.5"/></g><circle cx="8.7" cy="8.5" r="2.4" fill="#f5821f"/></svg>
  <div class="a tb" style="left:975px;top:7px;font-size:7.6px;color:#2c2a2c">ENG</div>
  <div class="a tb" style="left:978px;top:17px;font-size:7.6px;color:#2c2a2c">US</div>
  <svg class="a" style="left:1001.5px;top:11.5px" width="11" height="9" viewBox="0 0 11 9"><g fill="none" stroke="#444" stroke-width="1"><path d="M0.5 3Q5.5 -1.5 10.5 3M2 4.8Q5.5 1.8 9 4.8M3.5 6.5Q5.5 5 7.5 6.5"/></g><circle cx="5.5" cy="8" r=".9" fill="#444"/></svg>
  <svg class="a" style="left:1016.5px;top:11px" width="11" height="11" viewBox="0 0 11 11"><g fill="none" stroke="#444" stroke-width="1"><path d="M0.6 3.8H2.5L5 1.3V9.7L2.5 7.2H0.6Z"/><path d="M6.8 3.5Q8 5.5 6.8 7.5M8.5 2Q10.5 5.5 8.5 9"/></g></svg>
  <svg class="a" style="left:1032.5px;top:11.5px" width="14" height="8" viewBox="0 0 14 8"><rect x="0.5" y="1.5" width="11.5" height="6" rx="1" fill="#2fa02f" stroke="#333" stroke-width=".6"/><rect x="12.2" y="3.2" width="1.5" height="2.6" fill="#333"/><path d="M6 0V4M4.5 2.8L6 4.5L7.5 2.8" stroke="#111" stroke-width="1" fill="none"/></svg>
  <div class="a tb" style="left:1060px;top:6px;font-size:7.6px;color:#2c2a2c">7:17 PM</div>
  <div class="a tb" style="left:1056.5px;top:15.8px;font-size:7.6px;color:#2c2a2c">4/3/2026</div>
</div>
</body></html>
